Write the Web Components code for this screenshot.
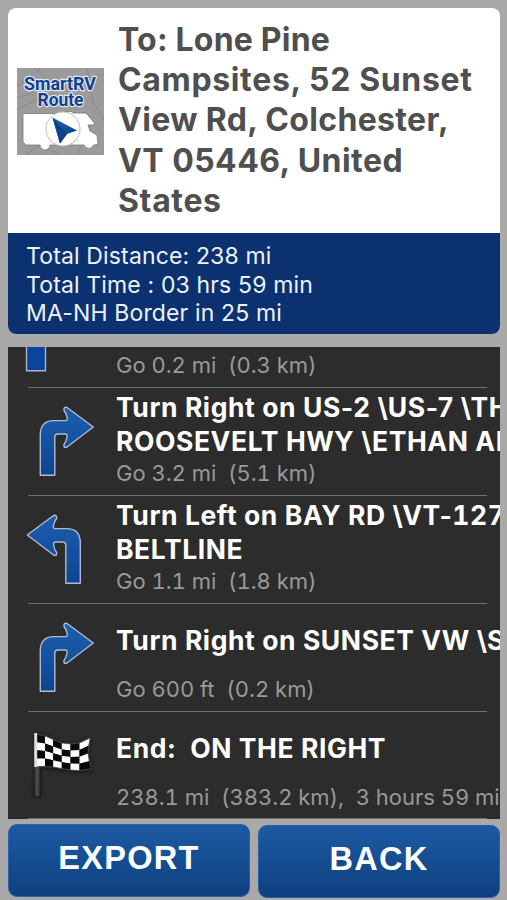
<!DOCTYPE html>
<html lang="en">
<head>
<meta charset="utf-8">
<title>SmartRV Route</title>
<style>
  html, body { height: 100%; }
  body {
    margin: 0;
    background: #a9a9a9;
    font-family: Inter, "Liberation Sans", sans-serif;
    overflow: hidden;
  }
  .tight { letter-spacing: .2px; }
  .street { letter-spacing: .35px; }
  .city { letter-spacing: .45px; }
  .num { font-variant-numeric: tabular-nums; }
</style>
</head>
<body>
<route-screen>
  <route-header slot="header">
    <span class="tight">To: Lone Pine</span> Campsites, 52 Sunset <span class="street">View Rd, Colchester,</span> <span class="city">VT 05446, United</span> States
    <summary-line slot="summary">Total Distance: 238 mi</summary-line>
    <summary-line slot="summary">Total Time : 03 hrs 59 min</summary-line>
    <summary-line slot="summary">MA-NH Border in 25 mi</summary-line>
  </route-header>

  <direction-row icon="straight">
    <span slot="distance">Go 0.2 mi&nbsp; (0.3 km)</span>
  </direction-row>
  <direction-row icon="right">
    Turn Right on US-2 \US-7 \TH<br>ROOSEVELT HWY \ETHAN AL
    <span slot="distance">Go 3.2 mi&nbsp; (5.1 km)</span>
  </direction-row>
  <direction-row icon="left">
    Turn Left on BAY RD \VT-<span class="num">127</span><br>BELTLINE
    <span slot="distance">Go 1.1 mi&nbsp; (1.8 km)</span>
  </direction-row>
  <direction-row icon="right">
    Turn Right on SUNSET VW \S
    <span slot="distance">Go 600 ft&nbsp; (0.2 km)</span>
  </direction-row>
  <direction-row icon="flag" class="last">
    End:&nbsp; ON THE RIGHT
    <span slot="distance">238.1 mi&nbsp; (383.2 km),&nbsp; 3 hours 59 mi</span>
  </direction-row>

  <action-button slot="actions">EXPORT</action-button>
  <action-button slot="actions" class="back">BACK</action-button>
</route-screen>

<script>
const ARROW_DEFS = `
  <defs>
    <linearGradient id="blue" x1="0" y1="0" x2="0" y2="1">
      <stop offset="0" stop-color="#1c5fae"/>
      <stop offset="1" stop-color="#0d448f"/>
    </linearGradient>
  </defs>`;

const TURN_PATH = 'M40.3 90.3V50Q40.3 35.6 54 35.6H65.5Q68 35.5 67 32Q66 28 64 25.500Q63.5 21.500 67 22.5L93.3 42L67 62Q63.5 63.5 64 59.500Q66.500 56 67 52Q67.500 49 65 49H58Q54.8 49 54.8 52V90.3Z';

// 6 x 4 chequered cells that follow the wave of the cloth
function flagCells() {
  const x = [36.5, 45, 53.2, 61.8, 70.5, 79.5, 89.5];
  const top = [25, 27, 30.5, 34, 35, 34, 29];
  const bottom = [57.5, 57, 58, 59.5, 61, 61.5, 60];
  const cols = 6, rows = 4;
  const y = (c, r) => top[c] + (bottom[c] - top[c]) * r / rows;
  // the free edge curls in halfway down
  const lean = (c, r) => x[c] + (c === cols ? [0.5, -1, -1.5, -0.5, 1.5][r] : 0);
  let cells = '';
  for (let c = 0; c < cols; c++) {
    for (let r = 0; r < rows; r++) {
      const fill = (c + r) % 2 ? '#fff' : '#090909';
      cells += `<polygon points="${lean(c, r)},${y(c, r)} ${lean(c + 1, r)},${y(c + 1, r)} ${lean(c + 1, r + 1)},${y(c + 1, r + 1)} ${lean(c, r + 1)},${y(c, r + 1)}" fill="${fill}"/>`;
    }
  }
  return cells;
}

const ICONS = {
  straight: `<path d="M26.5 40V93.700H45.5V40Z" fill="#0b459b" stroke="#a9b4cb" stroke-width="1.4"/>`,
  right: `${ARROW_DEFS}<path d="${TURN_PATH}" fill="url(#blue)" stroke="#aebbd0" stroke-width="1.4" stroke-linejoin="round"/>`,
  left: `${ARROW_DEFS}<path transform="translate(120.6 0) scale(-1 1)" d="${TURN_PATH}" fill="url(#blue)" stroke="#aebbd0" stroke-width="1.4" stroke-linejoin="round"/>`,
  flag: `
    <defs>
      <linearGradient id="pole" x1="0" x2="1">
        <stop offset="0" stop-color="#333"/><stop offset=".5" stop-color="#505050"/><stop offset="1" stop-color="#222"/>
      </linearGradient>
      <filter id="soft" x="-20%" y="-20%" width="140%" height="140%"><feGaussianBlur stdDeviation="1.4"/></filter>
    </defs>
    <path d="M35 24.500L45 26L62 33L71 34.500L80 33L91 28L89 44L93 62L80 64L60 62L41 59V88H33Z" fill="#161616" filter="url(#soft)"/>
    <rect x="34.600" y="56" width="5.600" height="31" rx="2.500" fill="url(#pole)"/>
    <g id="cells"></g>
    <path d="M36.500 25L45 27L53.200 30.500L61.800 34L70.500 35L79.500 34L90 29L88 44L91.500 60L79.500 61.500L70.500 61L61.800 59.500L53.200 58L36.500 57.500Z" fill="none" stroke="#555" stroke-width=".8"/>
    <rect x="34.200" y="24" width="3" height="34" fill="#ddd"/>`
};

class RouteScreen extends HTMLElement {
  constructor() {
    super();
    this.attachShadow({ mode: 'open' });
  }

  connectedCallback() {
    this.shadowRoot.innerHTML = `
      <style>
        :host {
          display: flex;
          flex-direction: column;
          box-sizing: border-box;
          width: 507px;
          height: 900px;
          padding: 8px 7px 0 8px;
        }
        .list {
          display: flex;
          flex-direction: column;
          justify-content: flex-end;
          height: 472px;
          margin-top: 13px;
          overflow: hidden;
          background: #2c2c2c;
        }
        .actions {
          display: flex;
          gap: 8px;
          margin-top: 5px;
        }
      </style>
      <slot name="header"></slot>
      <div class="list"><slot></slot></div>
      <div class="actions"><slot name="actions"></slot></div>
    `;
  }
}

class RouteLogo extends HTMLElement {
  constructor() {
    super();
    this.attachShadow({ mode: 'open' });
  }

  connectedCallback() {
    this.shadowRoot.innerHTML = `
      <style>
        :host { display: block; width: 87px; height: 87px; }
        svg { display: block; }
        text {
          font: 700 19px Roboto, "Liberation Sans", sans-serif;
          fill: #123f91;
          stroke: #e3e9f2;
          stroke-width: 2.4px;
          stroke-linejoin: round;
          paint-order: stroke;
        }
      </style>
      <svg width="87" height="87" viewBox="0 0 87 87">
        <defs>
          <linearGradient id="needle" x1="0" x2="1" y1="0" y2="1">
            <stop offset="0" stop-color="#1f67b5"/><stop offset="1" stop-color="#0b3a80"/>
          </linearGradient>
        </defs>
        <rect width="87" height="87" fill="#9b9b9b"/>
        <g fill="none" stroke="#8a8a8a" stroke-width="1">
          <path d="M0 18L14 8L24 0M17 0L32 13M62 12L87 6M70 0L76 34L87 52M0 42L20 31L60 40M8 87L24 77L44 87M60 87L64 78M0 30L17 24"/>
        </g>
        <path d="M6 45.500H45L47 43.500H54L56 45H69L77 54.500V57H71L73 63L80 67L81 76L78 77H76.500A5 5 0 0 1 67 77H33A5 5 0 0 1 23 77H9L6 74Z" fill="#fff" stroke="#777" stroke-width=".8"/>
        <circle cx="46" cy="61" r="17" fill="#fff" stroke="#bcbcbc" stroke-width="1"/>
        <path d="M35.500 49.500L60 62.500L50 66L43 75.500Z" fill="url(#needle)"/>
        <path d="M35.500 49.500L50 66L43 75.500Z" fill="#0e3f88"/>
        <text x="7" y="22" textLength="72" lengthAdjust="spacingAndGlyphs">SmartRV</text>
        <text x="20.500" y="38.200" textLength="46" lengthAdjust="spacingAndGlyphs">Route</text>
      </svg>
    `;
  }
}

class RouteHeader extends HTMLElement {
  constructor() {
    super();
    this.attachShadow({ mode: 'open' });
  }

  connectedCallback() {
    this.shadowRoot.innerHTML = `
      <style>
        :host {
          display: flex;
          flex-direction: column;
          height: 326px;
          border-radius: 8px;
          overflow: hidden;
          background: #fff;
        }
        .to {
          display: flex;
          align-items: center;
          box-sizing: border-box;
          height: 225px;
          padding: 0 15px 0 9px;
        }
        route-logo { margin-bottom: 19px; }
        .address {
          flex: 1;
          margin: 0 0 0 14px;
          font-size: 32px;
          font-weight: 700;
          line-height: 40.2px;
          letter-spacing: .65px;
          color: #4f4f4f;
        }
        .summary {
          flex: 1;
          box-sizing: border-box;
          padding: 9px 18px 0;
          background: #0c3171;
          color: #eef3fb;
        }
      </style>
      <div class="to">
        <route-logo></route-logo>
        <h1 class="address"><slot></slot></h1>
      </div>
      <div class="summary"><slot name="summary"></slot></div>
    `;
  }
}

class SummaryLine extends HTMLElement {
  constructor() {
    super();
    this.attachShadow({ mode: 'open' });
  }

  connectedCallback() {
    this.shadowRoot.innerHTML = `
      <style>
        :host {
          display: block;
          font-size: 23px;
          line-height: 28.6px;
          letter-spacing: .15px;
          white-space: nowrap;
        }
      </style>
      <slot></slot>
    `;
  }
}

class DirectionRow extends HTMLElement {
  constructor() {
    super();
    this.attachShadow({ mode: 'open' });
  }

  connectedCallback() {
    const icon = this.getAttribute('icon');
    this.shadowRoot.innerHTML = `
      <style>
        :host {
          display: flex;
          flex: none;
          height: 108px;
          box-sizing: border-box;
          background: linear-gradient(#707070, #707070) 20px 100% / 459px 1px no-repeat;
          white-space: nowrap;
        }
        :host(.last) { height: 107px; }
        svg { flex: none; width: 108px; height: 108px; }
        .text { padding-top: 3px; }
        .title {
          display: flex;
          align-items: center;
          height: 67px;
          font-size: 26.5px;
          font-weight: 700;
          line-height: 33.5px;
          letter-spacing: .58px;
          color: #fff;
        }
        .distance {
          margin-top: 1px;
          font-size: 22px;
          line-height: 28px;
          letter-spacing: -.03px;
          font-variant-numeric: tabular-nums;
          color: #999;
        }
      </style>
      <svg viewBox="8 3 108 108">${ICONS[icon]}</svg>
      <div class="text">
        <div class="title"><div><slot></slot></div></div>
        <div class="distance"><slot name="distance"></slot></div>
      </div>
    `;
    const cells = this.shadowRoot.getElementById('cells');
    if (cells) cells.innerHTML = flagCells();
  }
}

class ActionButton extends HTMLElement {
  constructor() {
    super();
    this.attachShadow({ mode: 'open' });
  }

  connectedCallback() {
    this.shadowRoot.innerHTML = `
      <style>
        :host { display: block; flex: 1; }
        :host(.back) { margin-top: 1px; }
        button {
          display: block;
          width: 100%;
          height: 73px;
          padding: 0 0 4px;
          border: 1px solid #2c62a5;
          border-radius: 9px;
          background: linear-gradient(#1d5aa3, #0e4080);
          color: #fff;
          font: 700 32.5px "Liberation Sans", Arial, sans-serif;
          letter-spacing: 1.3px;
        }
      </style>
      <button><slot></slot></button>
    `;
  }
}

customElements.define('route-screen', RouteScreen);
customElements.define('route-logo', RouteLogo);
customElements.define('route-header', RouteHeader);
customElements.define('summary-line', SummaryLine);
customElements.define('direction-row', DirectionRow);
customElements.define('action-button', ActionButton);
</script>
</body>
</html>
